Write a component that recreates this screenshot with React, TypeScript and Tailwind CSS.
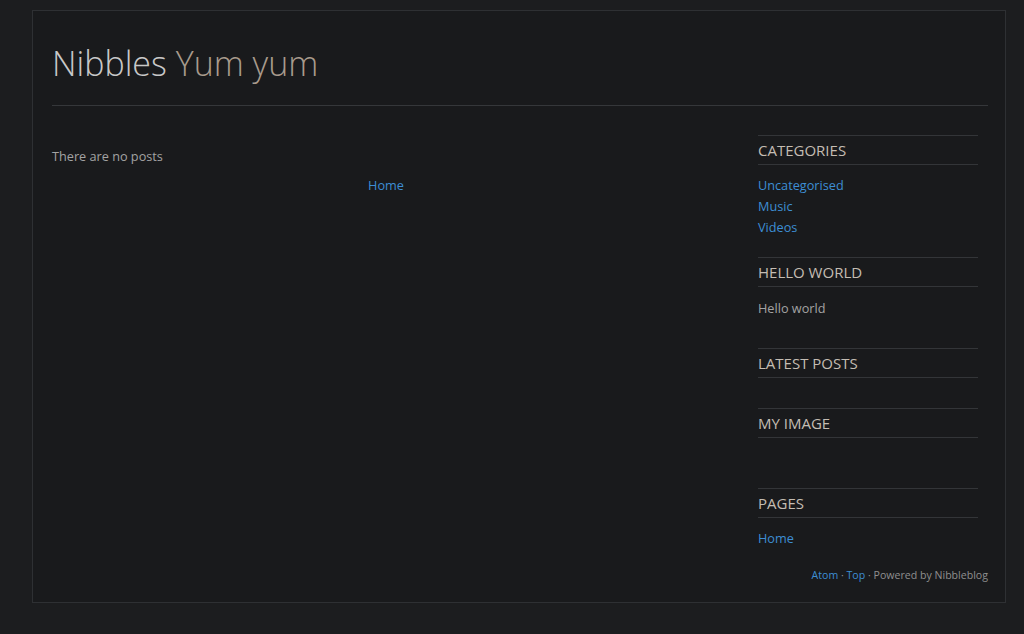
import React from "react";

const categories = ["Uncategorised", "Music", "Videos"];

function WidgetTitle({ children }: { children: React.ReactNode }) {
  return (
    <h2 className="border-y border-[#333538] h-[30px] flex items-center text-[15px] uppercase text-[#c4bdb3]">
      {children}
    </h2>
  );
}

export default function App() {
  return (
    <div
      className="min-h-[634px] bg-[#1c1d1f] pt-[10px] pb-[31px]"
      style={{ fontFamily: '"Open Sans", "DejaVu Sans", sans-serif' }}
    >
      <div className="ml-[32px] w-[974px] border border-[#2e3033] bg-[#191a1c] pl-[19px] pr-[17px]">
        {/* Header */}
        <header className="pt-[32px] pb-[21px] border-b border-[#35373a]">
          <h1 className="text-[34px] font-light leading-[41px]">
            <span className="text-[#c8c8c8]">Nibbles</span>{" "}
            <span className="text-[#a89b8c]">Yum yum</span>
          </h1>
        </header>

        <div className="flex">
          {/* Main */}
          <main className="w-[668px] pt-[40px] text-[12.7px] leading-[21px]">
            <p className="text-[#a3a3a3]">There are no posts</p>
            <div className="mt-[8px] text-center">
              <a href="#" className="text-[#3d8ed4]">
                Home
              </a>
            </div>
          </main>

          {/* Sidebar */}
          <aside className="w-[220px] ml-[38px] pt-[29px] text-[12.7px] leading-[21px]">
            <section className="mb-[19px]">
              <WidgetTitle>Categories</WidgetTitle>
              <ul className="mt-[10px]">
                {categories.map((c) => (
                  <li key={c}>
                    <a href="#" className="text-[#3d8ed4]">
                      {c}
                    </a>
                  </li>
                ))}
              </ul>
            </section>

            <section className="mb-[29px]">
              <WidgetTitle>Hello world</WidgetTitle>
              <p className="mt-[11px] text-[#a3a3a3]">Hello world</p>
            </section>

            <section className="mb-[30px]">
              <WidgetTitle>Latest posts</WidgetTitle>
            </section>

            <section className="mb-[50px]">
              <WidgetTitle>My image</WidgetTitle>
            </section>

            <section>
              <WidgetTitle>Pages</WidgetTitle>
              <ul className="mt-[10px]">
                <li>
                  <a href="#" className="text-[#3d8ed4]">
                    Home
                  </a>
                </li>
              </ul>
            </section>
          </aside>
        </div>

        {/* Footer */}
        <footer className="pt-[18px] pb-[19px] text-right text-[10.6px] leading-[16px] text-[#8f8f8f]">
          <a href="#" className="text-[#3d8ed4]">
            Atom
          </a>{" "}
          ·{" "}
          <a href="#" className="text-[#3d8ed4]">
            Top
          </a>{" "}
          · Powered by Nibbleblog
        </footer>
      </div>
    </div>
  );
}
